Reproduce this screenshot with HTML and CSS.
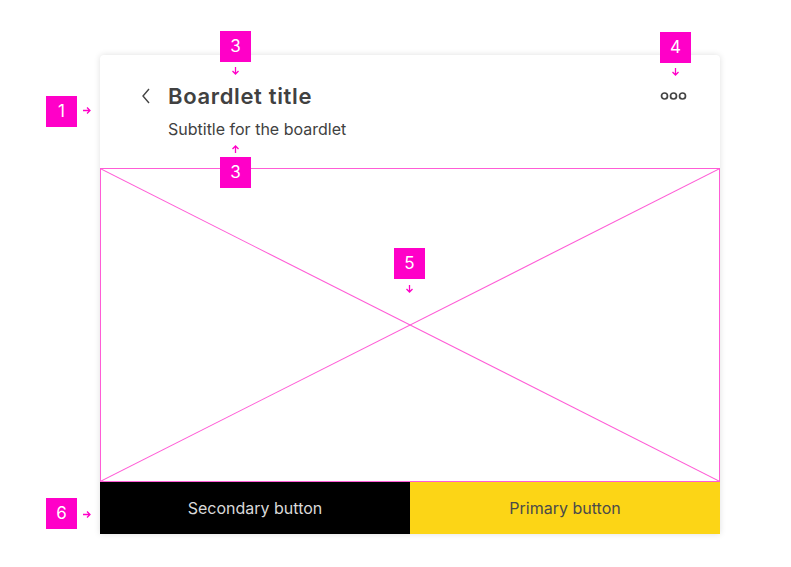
FILE: index.html
```html
<!DOCTYPE html>
<html lang="en">
<head>
    <meta charset="utf-8">
    <title>Boardlet anatomy</title>
    <link rel="stylesheet" href="styles.css">
</head>
<body>
    <main class="anatomy">
        <section class="boardlet">
            <header class="boardlet-header">
                <div class="boardlet-titles">
                    <div class="title-row">
                        <svg class="back-icon" width="16" height="18" viewBox="0 0 16 18">
                            <path d="M10 2 L4 9 L10 16" fill="none" stroke="#444" stroke-width="1.4"/>
                        </svg>
                        <h1 class="boardlet-title">Boardlet title</h1>
                    </div>
                    <p class="boardlet-subtitle">Subtitle for the boardlet</p>
                </div>
                <svg class="more-icon" width="28" height="10" viewBox="0 0 28 10">
                    <circle cx="4.5" cy="5" r="3" fill="none" stroke="#444" stroke-width="1.7"/>
                    <circle cx="13.5" cy="5" r="3" fill="none" stroke="#444" stroke-width="1.7"/>
                    <circle cx="22.5" cy="5" r="3" fill="none" stroke="#444" stroke-width="1.7"/>
                </svg>
            </header>

            <div class="boardlet-content">
                <svg class="placeholder-cross" viewBox="0 0 618 312" preserveAspectRatio="none">
                    <line x1="0" y1="0" x2="618" y2="312"/>
                    <line x1="618" y1="0" x2="0" y2="312"/>
                </svg>
            </div>

            <footer class="boardlet-actions">
                <button class="action action-secondary">Secondary button</button>
                <button class="action action-primary">Primary button</button>
            </footer>
        </section>

        <!-- Annotation markers -->
        <div class="marker marker-1">1</div>
        <svg class="pointer pointer-1" width="9" height="9" viewBox="0 0 9 9"><path d="M1 4.5 H8 M5 1.5 L8 4.5 L5 7.5"/></svg>

        <div class="marker marker-3a">3</div>
        <svg class="pointer pointer-3a" width="9" height="9" viewBox="0 0 9 9"><path d="M4.5 1 V8 M1.5 5 L4.5 8 L7.5 5"/></svg>

        <div class="marker marker-3b">3</div>
        <svg class="pointer pointer-3b" width="9" height="9" viewBox="0 0 9 9"><path d="M4.5 8 V1 M1.5 4 L4.5 1 L7.5 4"/></svg>

        <div class="marker marker-4">4</div>
        <svg class="pointer pointer-4" width="9" height="9" viewBox="0 0 9 9"><path d="M4.5 1 V8 M1.5 5 L4.5 8 L7.5 5"/></svg>

        <div class="marker marker-5">5</div>
        <svg class="pointer pointer-5" width="9" height="9" viewBox="0 0 9 9"><path d="M4.5 1 V8 M1.5 5 L4.5 8 L7.5 5"/></svg>

        <div class="marker marker-6">6</div>
        <svg class="pointer pointer-6" width="9" height="9" viewBox="0 0 9 9"><path d="M1 4.5 H8 M5 1.5 L8 4.5 L5 7.5"/></svg>
    </main>
</body>
</html>
```

FILE: styles.css
```css
:root {
    --magenta: #ff00c8;
    --guide: #ff5cd6;
    --text: #414141;
    --yellow: #fcd516;
}

* {
    margin: 0;
    padding: 0;
    box-sizing: border-box;
}

body {
    font-family: Inter, "Noto Sans", sans-serif;
    background: #fff;
    color: var(--text);
}

.anatomy {
    position: relative;
    width: 791px;
    height: 567px;
    padding: 55px 0 0 100px;
}

.boardlet {
    width: 620px;
    background: #fff;
    border-radius: 4px 4px 0 0;
    box-shadow: 0 0 6px rgba(0, 0, 0, 0.13);
}

.boardlet-header {
    display: flex;
    justify-content: space-between;
    align-items: flex-start;
    height: 113px;
    padding: 27px 32px 0 39px;
}

.title-row {
    display: flex;
    align-items: center;
    gap: 13px;
    height: 28px;
}

.back-icon {
    display: block;
}

.boardlet-title {
    font-size: 22px;
    font-weight: 600;
    line-height: 28px;
    color: var(--text);
    letter-spacing: 0.03em;
}

.boardlet-subtitle {
    margin: 8px 0 0 29px;
    font-size: 16px;
    line-height: 22px;
    color: var(--text);
}

.more-icon {
    display: block;
    margin-top: 9px;
}

.boardlet-content {
    height: 314px;
    border: 1px solid var(--guide);
}

.placeholder-cross {
    display: block;
    width: 100%;
    height: 100%;
}

.placeholder-cross line {
    stroke: var(--guide);
    stroke-width: 1.1;
}

.boardlet-actions {
    display: grid;
    grid-template-columns: 1fr 1fr;
    height: 52px;
}

.action {
    border: 0;
    font-family: Inter, "Noto Sans", sans-serif;
    font-size: 16px;
}

.action-secondary {
    background: #000;
    color: #d9d9d9;
}

.action-primary {
    background: var(--yellow);
    color: #4a4a4a;
}

.marker {
    position: absolute;
    width: 31px;
    height: 31px;
    display: grid;
    place-items: center;
    background: var(--magenta);
    color: #fff;
    font-size: 17px;
    line-height: 1;
}

.pointer {
    position: absolute;
}

.pointer path {
    fill: none;
    stroke: var(--magenta);
    stroke-width: 1.3;
}

.marker-1 { left: 46px; top: 96px; }
.pointer-1 { left: 82px; top: 106px; }

.marker-3a { left: 220px; top: 31px; }
.pointer-3a { left: 231px; top: 66px; }

.marker-3b { left: 220px; top: 157px; }
.pointer-3b { left: 231px; top: 145px; }

.marker-4 { left: 660px; top: 32px; }
.pointer-4 { left: 671px; top: 67px; }

.marker-5 { left: 394px; top: 248px; }
.pointer-5 { left: 405px; top: 284px; }

.marker-6 { left: 46px; top: 498px; }
.pointer-6 { left: 82px; top: 510px; }
```
